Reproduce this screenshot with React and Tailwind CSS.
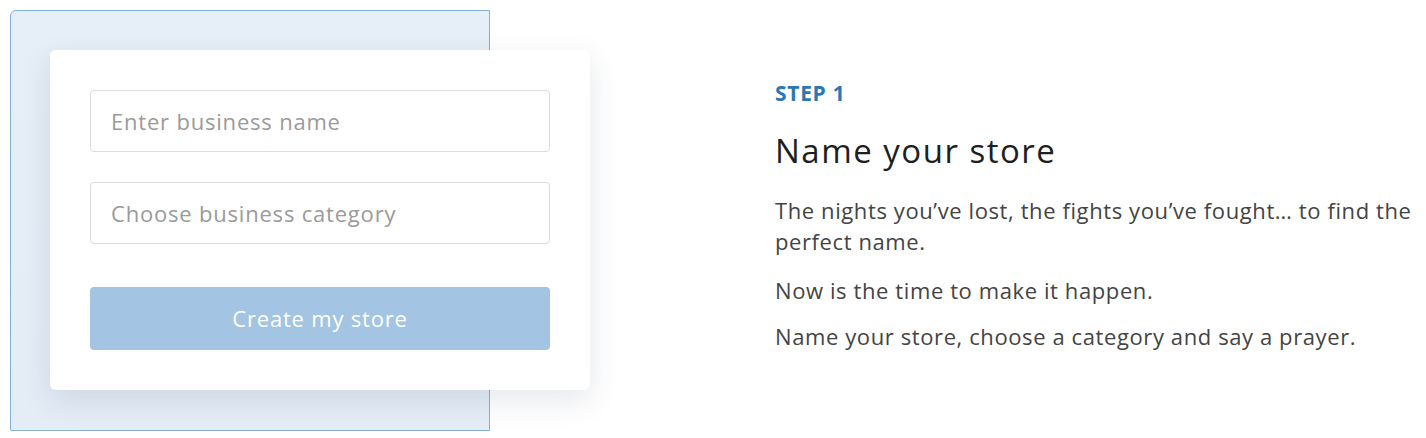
export default function App() {
  return (
    <div className="w-[1426px] h-[438px] bg-white flex overflow-hidden" style={{ fontFamily: '"Open Sans", sans-serif' }}>
      <div className="pl-[10px] pt-[10px] shrink-0">
        <div className="w-[480px] h-[421px] rounded-tl-[6px] rounded-bl-[2px] border border-[#86b0d8] bg-gradient-to-b from-[#e6eef7] to-[#e4edf6] pt-[39px] pl-[39px]">
          <div className="w-[540px] h-[340px] bg-white rounded-[6px] shadow-[0_10px_30px_rgba(40,60,90,0.12)] px-[40px] pt-[40px] flex flex-col">
            <div className="h-[62px] rounded-[4px] border border-[#dcdcdc] flex items-center px-[20px] text-[22px] tracking-[0.8px] text-[#9a9a9a]">Enter business name</div>
            <div className="h-[62px] mt-[30px] rounded-[4px] border border-[#dcdcdc] flex items-center px-[20px] text-[22px] tracking-[0.8px] text-[#9a9a9a]">Choose business category</div>
            <div className="h-[63px] mt-[43px] rounded-[4px] bg-[#a3c5e3] flex items-center justify-center text-[22px] tracking-[0.8px] text-white">Create my store</div>
          </div>
        </div>
      </div>
      <div className="ml-[285px] pt-[79px] flex-1">
        <div className="text-[21px] font-bold text-[#2b76b6] leading-[28px] tracking-[0.7px]">STEP 1</div>
        <div className="mt-[21px] text-[33px] text-[#1e1e1e] leading-[46px] tracking-[1.5px]">Name your store</div>
        <div className="mt-[21px] text-[22px] text-[#444] leading-[31px] tracking-[0.6px]">
          <p>The nights you’ve lost, the fights you’ve fought… to find the perfect name.</p>
          <p className="mt-[18px]">Now is the time to make it happen.</p>
          <p className="mt-[15px]">Name your store, choose a category and say a prayer.</p>
        </div>
      </div>
    </div>
  );
}
